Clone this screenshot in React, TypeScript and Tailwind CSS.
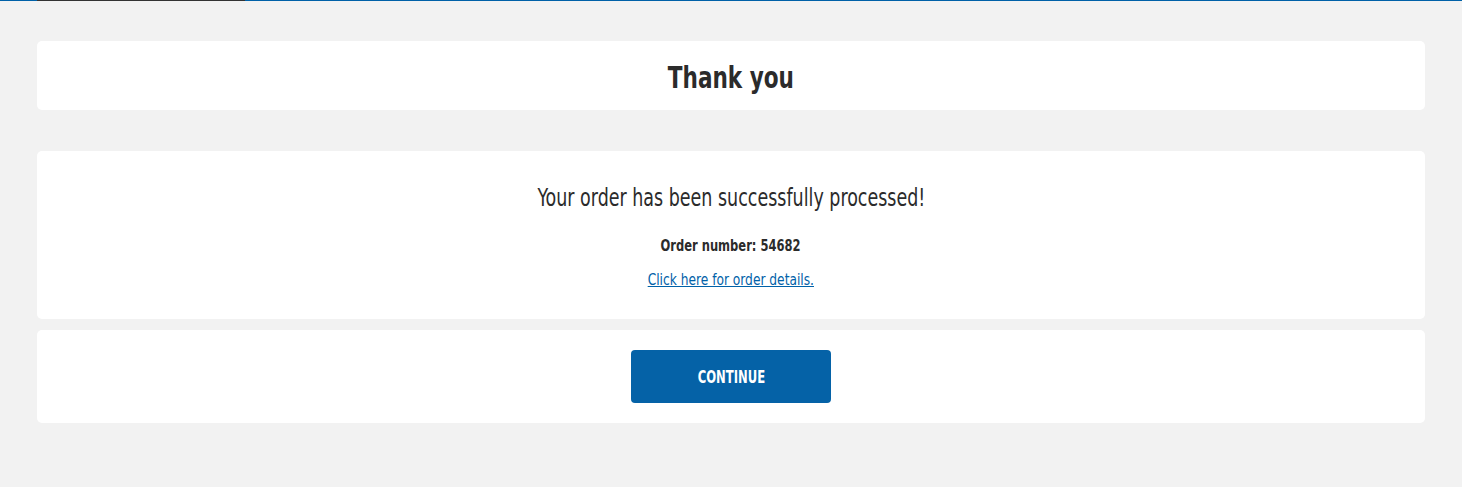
import React from "react";

//-----------------------------------------------------------------------------------------------

const font = {fontFamily: '"Liberation Sans Narrow", "DejaVu Sans Condensed", "Roboto Condensed", sans-serif'};

export default function App() {
  return (
    <div className="min-h-[487px] bg-[#f2f2f2] text-[#2b2b2b]" style={font}>
      <div className="flex h-px bg-[#0061a8]">
        <div className="ml-[37px] w-[208px] bg-[#333333]"/>
      </div>

      <div className="px-[37px] pt-[40px]">
        <div className="flex h-[69px] items-center justify-center rounded-[5px] bg-white pt-[3px]">
          <h1 className="inline-block scale-x-[0.8] text-[30px] font-bold">Thank you</h1>
        </div>

        <div className="mt-[41px] flex h-[168px] flex-col items-center rounded-[5px] bg-white pt-[31px]">
          <p className="inline-block scale-x-[0.81] text-[24px] leading-[32px]">
            Your order has been successfully processed!
          </p>
          <p className="mt-[21px] inline-block scale-x-[0.8] text-[16px] font-bold leading-[22px]">
            Order number: 54682
          </p>
          <a href="#" className="mt-[12px] inline-block scale-x-[0.85] text-[16px] leading-[22px] text-[#0061a8] underline">
            Click here for order details.
          </a>
        </div>

        <div className="mt-[11px] flex h-[93px] items-start justify-center rounded-[5px] bg-white pt-[20px]">
          <button
            type="button"
            className="flex h-[53px] w-[200px] items-center justify-center rounded-[4px] bg-[#0562a7] text-white">
            <span className="inline-block scale-x-[0.76] pt-[2px] text-[17px] font-bold uppercase">Continue</span>
          </button>
        </div>
      </div>
    </div>
  );
}
